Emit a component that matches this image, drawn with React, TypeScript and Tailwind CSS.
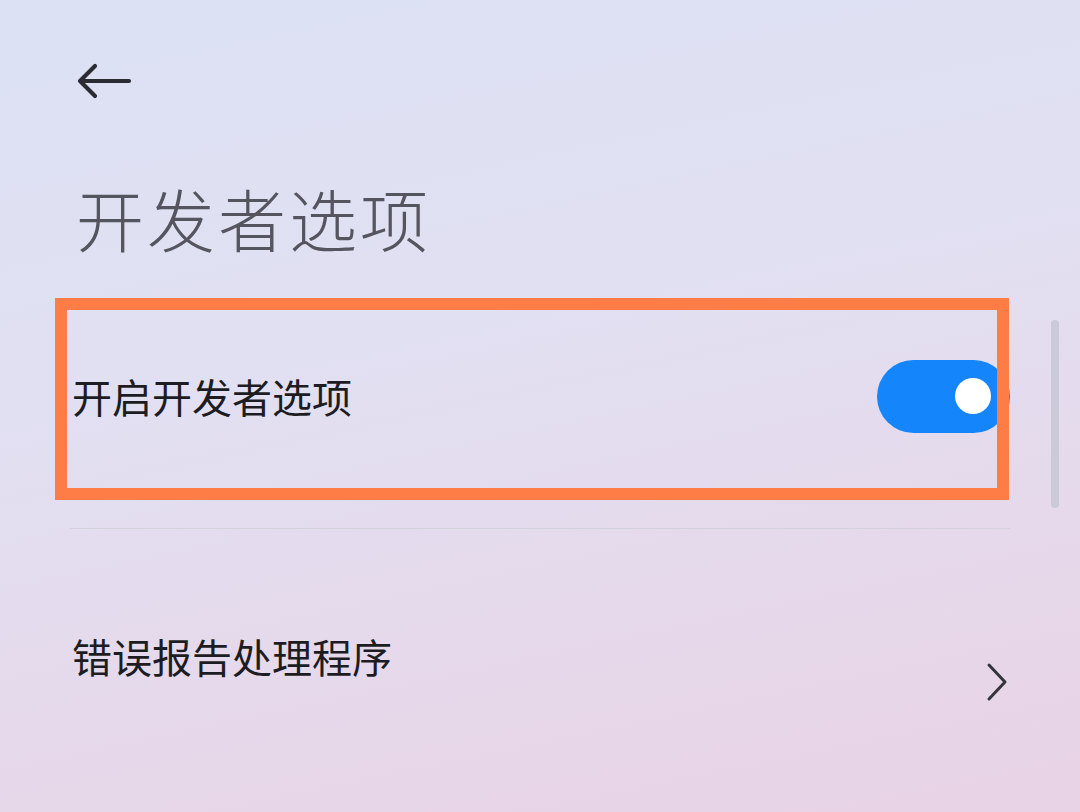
import React from "react";

function BackArrow() {
  return (
    <svg width="56" height="36" viewBox="0 0 56 36" fill="none">
      <path
        d="M4 18 H53 M19 3 L4 18 L19 33"
        stroke="#2b2b33"
        strokeWidth="4.2"
        strokeLinecap="round"
        strokeLinejoin="round"
      />
    </svg>
  );
}

function Chevron() {
  return (
    <svg width="22" height="40" viewBox="0 0 22 40" fill="none">
      <path
        d="M3 3 L19 20 L3 37"
        stroke="#34343c"
        strokeWidth="3"
        strokeLinecap="round"
        strokeLinejoin="round"
      />
    </svg>
  );
}

function Toggle() {
  return (
    <div className="flex h-[73px] w-[133px] items-center justify-end rounded-full bg-[#1585fb] pr-[19px]">
      <div className="h-[36px] w-[36px] rounded-full bg-white" />
    </div>
  );
}

export default function App() {
  return (
    <div className="relative h-[812px] w-[1080px] overflow-hidden bg-[linear-gradient(168deg,#dce1f4_0%,#e1e0f2_40%,#e6d8ea_75%,#e8d2e5_100%)] font-['Noto_Sans_CJK_SC',sans-serif]">
      <div className="flex flex-col pl-[72px] pr-[70px]">
        <div className="flex h-[162px] items-center pl-[4px]">
          <BackArrow />
        </div>
        <div className="flex h-[112px] items-center">
          <h1 className="pl-[4px] text-[68px] leading-none font-extralight tracking-[3px] text-[#55555f]">开发者选项</h1>
        </div>
        <div className="flex h-[244px] items-center justify-between">
          <span className="text-[40px] leading-none text-[#1c1c22]">开启开发者选项</span>
          <Toggle />
        </div>
        <div className="mt-[10px] -ml-[2px] h-px bg-[#d2d1dc]" />
        <div className="flex h-[254px] items-center justify-between">
          <span className="text-[40px] leading-none text-[#1c1c22]">错误报告处理程序</span>
          <div className="mt-[52px] pr-[2px]">
            <Chevron />
          </div>
        </div>
      </div>

      {/* annotation frame over the first row */}
      <div className="absolute left-[55px] top-[298px] h-[202px] w-[954px] border-[12px] border-[#fe7c45]" />

      {/* scrollbar */}
      <div className="absolute left-[1051px] top-[320px] h-[188px] w-[8px] rounded-full bg-[#cbcad8]" />
    </div>
  );
}
